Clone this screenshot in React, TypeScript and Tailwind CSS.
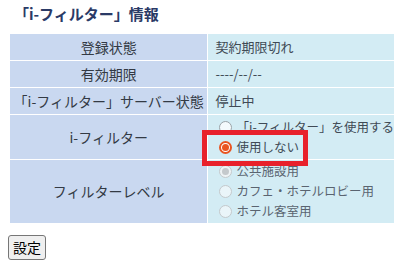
import React, { useState } from 'react';

const FONT = { fontFamily: '"Noto Sans CJK JP", "Noto Sans", sans-serif' };

type RadioProps = {
  checked: boolean;
  disabled?: boolean;
  label: string;
  onClick?: () => void;
};

const Radio: React.FC<RadioProps> = ({ checked, disabled, label, onClick }) => {
  let circle = 'border border-[#9aa3a8] bg-[#f4fafc]';
  if (checked && !disabled) circle = 'border-2 border-[#e95420] bg-white';
  if (disabled) circle = checked ? 'border border-[#c4c9cc] bg-[#eef3f5]' : 'border border-[#c4c9cc] bg-[#eaf5f9]';
  return (
    <label className="flex items-center h-[20px] gap-[4px] cursor-pointer whitespace-nowrap" onClick={disabled ? undefined : onClick}>
      <span className={`w-[13px] h-[13px] rounded-full flex items-center justify-center shrink-0 ${circle}`}>
        {checked && !disabled && <span className="w-[7px] h-[7px] rounded-full bg-[#e95420]" />}
        {checked && disabled && <span className="w-[7px] h-[7px] rounded-full bg-[#c4c9cc]" />}
      </span>
      <span className={`text-[12.5px] leading-none ${disabled ? 'text-[#5a6470]' : 'text-[#404a55]'}`}>{label}</span>
    </label>
  );
};

const App: React.FC = () => {
  const [useFilter, setUseFilter] = useState(false);

  const labelCls = 'bg-[#c9d8f0] border border-white text-center text-[14px] text-[#333a44] w-[199px] p-0';
  const valueCls = 'bg-[#d3ecf4] border border-white text-left text-[13px] text-[#404a55] pl-[7px] p-0';

  return (
    <div className="w-[414px] h-[270px] bg-white" style={FONT}>
      <h1 className="pl-[14px] pt-[4px] h-[30px] text-[15px] font-bold text-[#2a3a66] leading-[20px]">
        「i-フィルター」情報
      </h1>
      <table className="ml-[9px] mt-[3px] w-[386px] border-collapse">
        <tbody>
          <tr className="h-[27px]">
            <td className={labelCls}>登録状態</td>
            <td className={valueCls}>契約期限切れ</td>
          </tr>
          <tr className="h-[27px]">
            <td className={labelCls}>有効期限</td>
            <td className={valueCls}>----/--/--</td>
          </tr>
          <tr className="h-[27px]">
            <td className={labelCls}>「i-フィルター」サーバー状態</td>
            <td className={valueCls}>停止中</td>
          </tr>
          <tr className="h-[45px]">
            <td className={labelCls}>i-フィルター</td>
            <td className={`${valueCls} pl-[11px]`}>
              <div className="flex flex-col">
                <Radio checked={useFilter} label="「i-フィルター」を使用する" onClick={() => setUseFilter(true)} />
                <div className="relative">
                  <div className="absolute left-[-17px] top-[-7px] w-[106px] h-[36px] border-[5px] border-[#e8212b] pointer-events-none" />
                  <Radio checked={!useFilter} label="使用しない" onClick={() => setUseFilter(false)} />
                </div>
              </div>
            </td>
          </tr>
          <tr className="h-[64px]">
            <td className={labelCls}>フィルターレベル</td>
            <td className={`${valueCls} pl-[11px]`}>
              <div className="flex flex-col">
                <Radio checked disabled={!useFilter} label="公共施設用" />
                <Radio checked={false} disabled={!useFilter} label="カフェ・ホテルロビー用" />
                <Radio checked={false} disabled={!useFilter} label="ホテル客室用" />
              </div>
            </td>
          </tr>
        </tbody>
      </table>
      <div className="pl-[8px] pt-[10px]">
        <button className="h-[25px] px-[4px] text-[14px] text-black bg-[#efefef] border border-[#767676] rounded-[3px] leading-none">
          設定
        </button>
      </div>
    </div>
  );
};

export default App;
